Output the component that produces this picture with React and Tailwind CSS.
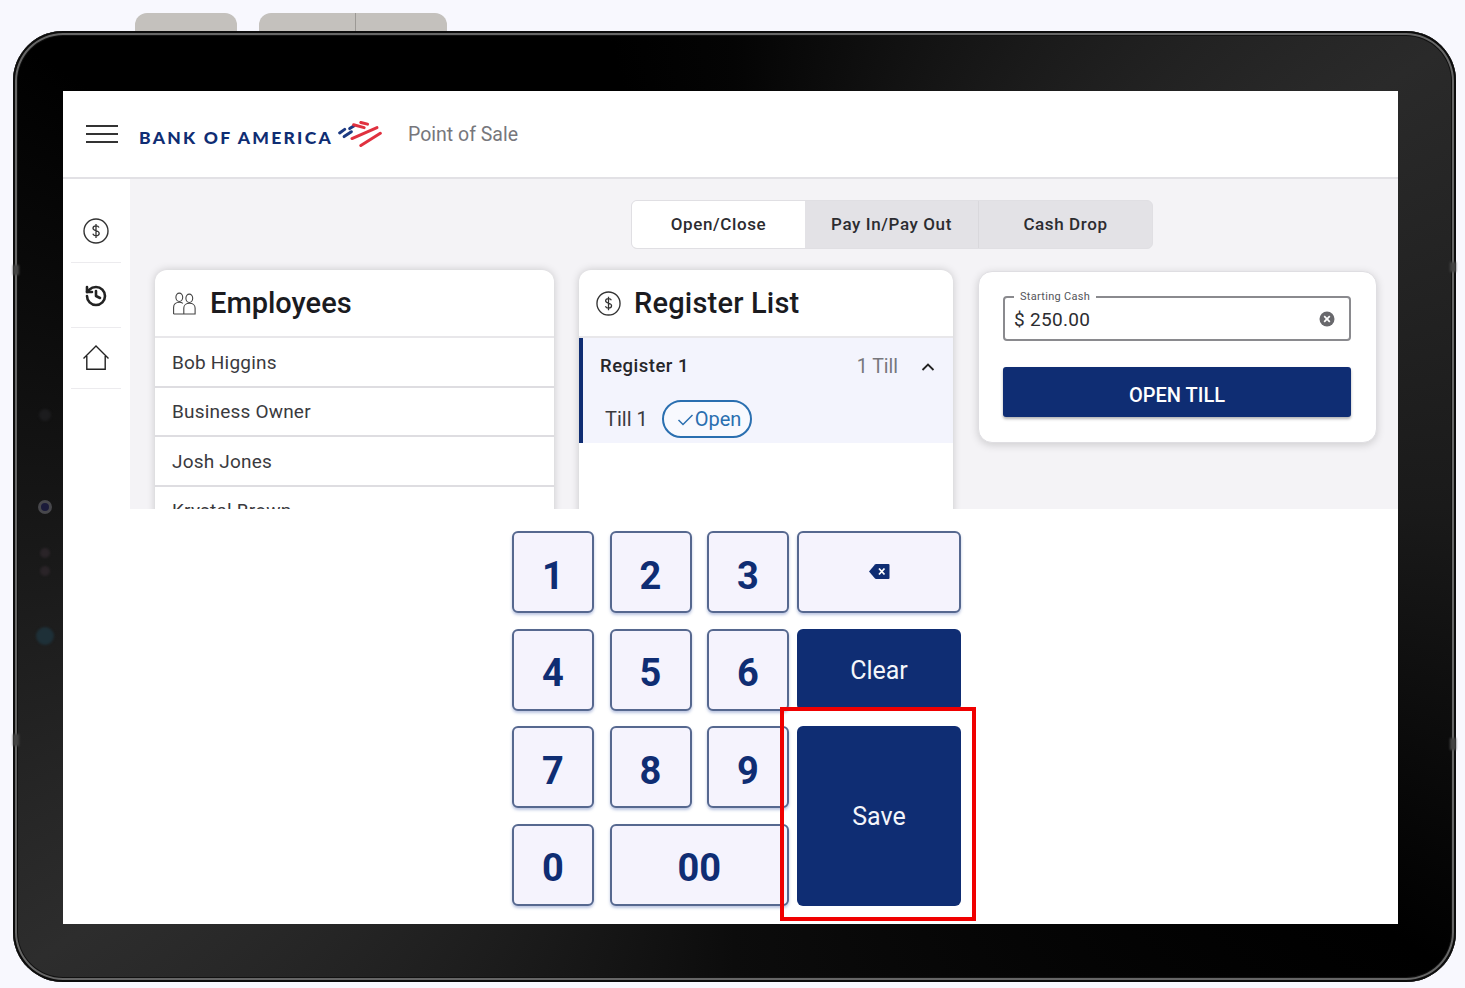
import React from "react";
import { History } from "lucide-react";

const DollarIcon = ({ size = 26 }) => (
  <svg width={size} height={size} viewBox="0 0 26 26" fill="none" stroke="#333" strokeWidth="1.4">
    <circle cx="13" cy="13" r="12" />
    <path d="M16 9.6c-.5-1.2-1.6-1.8-3-1.8-1.7 0-3 .9-3 2.4 0 3.3 6.2 1.8 6.2 5.1 0 1.5-1.4 2.5-3.2 2.5-1.5 0-2.7-.7-3.2-2M13 6v14" strokeWidth="1.3" />
  </svg>
);

const HomeIcon = () => (
  <svg width="28" height="28" viewBox="0 0 28 28" fill="none" stroke="#222" strokeWidth="1.4">
    <path d="M1.5 14.5 14 2l12.5 12.5M4.8 12v13.2h18.4V12" />
  </svg>
);

const PeopleIcon = () => (
  <svg width="23" height="23" viewBox="0 0 23 23" fill="none" stroke="#444" strokeWidth="1.1">
    <ellipse cx="6.3" cy="5.3" rx="3.4" ry="4.2" />
    <ellipse cx="16.3" cy="6.3" rx="3.4" ry="4.2" />
    <path d="M.6 22v-6.5c0-3 2.3-5.2 5.700-5.200 1.500 0 2.700.4 3.600 1.100" />
    <path d="M.6 22h21.500v-6c0-2.700-2.300-4.700-5.600-4.700s-5.700 2-5.700 4.700v6" />
  </svg>
);

const BofaFlag = () => (
  <svg width="44" height="26" viewBox="0 -1 39.5 23.3" fill="none" strokeWidth="2.7" strokeLinecap="round">
    <g stroke="#1c3a82">
      <path d="M1.5 9.7 6 6.500" />
      <path d="M5.500 13 12 8.600" />
      <path d="M10.500 5.800 14.500 3.200" />
    </g>
    <g stroke="#e0313f">
      <path d="M20.500 .3 26.500 1.800" />
      <path d="M14 2.400 23.500 4.900" />
      <path d="M12.500 14.700 35 4.900" />
      <path d="M20.500 21 38 10" />
    </g>
  </svg>
);

const Key = ({ children, className = "" }) => (
  <button className={`flex items-center justify-center rounded-md border-2 border-[#56688f] bg-[#f5f3fd] pt-[8px] text-[38px] font-bold text-[#0f2d73] shadow-[0_2px_3px_rgba(60,90,170,0.35)] ${className}`}>
    {children}
  </button>
);

const ListRow = ({ name }) => (
  <div className="flex h-[49.5px] items-center border-b-2 border-[#dedde1] pl-[17px] pt-[2px] text-[19px] tracking-[0.2px] text-[#3a3a3e]">
    {name}
  </div>
);

const SideItem = ({ children, className = "" }) => (
  <div className={`ml-[8px] mr-[9px] flex items-center justify-center border-b border-[#ecebee] ${className}`}>
    {children}
  </div>
);

export default function App() {
  return (
    <div className="relative h-[988px] w-[1465px] overflow-hidden bg-[#f8f8fe] font-['Roboto',sans-serif]">
      {/* buttons on top of the tablet */}
      <div className="absolute left-[135px] top-[13px] h-[24px] w-[102px] rounded-t-[12px] bg-[#c4c1bd]" />
      <div className="absolute left-[259px] top-[13px] h-[24px] w-[188px] rounded-t-[12px] bg-[#c4c1bd]">
        <div className="h-full w-[97px] border-r border-[#9c9995]" />
      </div>

      <div className="absolute left-[13px] top-[31px] h-[951px] w-[1443px] rounded-[50px] bg-[conic-gradient(#040404_0deg,#2a2a2a_57deg,#1a1a1a_90deg,#000_123deg,#0c0c0c_180deg,#2d2d2d_237deg,#161616_270deg,#000_303deg,#000_345deg,#040404_360deg)] pl-[50px] pt-[60px] shadow-[inset_0_0_0_2px_#0c0c0c,inset_0_0_0_4px_#666,inset_0_0_0_5px_#111]">
        {/* side button marks */}
        <div className="absolute left-0 top-[234px] h-[10px] w-[6px] bg-[#444] blur-[1px]" />
        <div className="absolute left-0 top-[703px] h-[12px] w-[6px] bg-[#444] blur-[1px]" />
        <div className="absolute right-0 top-[231px] h-[10px] w-[6px] bg-[#444] blur-[1px]" />
        <div className="absolute right-0 top-[707px] h-[12px] w-[6px] bg-[#444] blur-[1px]" />

        {/* camera dots */}
        <div className="absolute left-[26px] top-[378px] h-[12px] w-[12px] rounded-full bg-[#1c1c1e] blur-[1px]" />
        <div className="absolute left-[25px] top-[469px] h-[14px] w-[14px] rounded-full border-[3px] border-[#47474b] bg-[#1b1b3a] blur-[0.5px]" />
        <div className="absolute left-[27px] top-[517px] h-[10px] w-[10px] rounded-full bg-[#2a2428] blur-[1px]" />
        <div className="absolute left-[27px] top-[535px] h-[10px] w-[10px] rounded-full bg-[#2a2428] blur-[1px]" />
        <div className="absolute left-[23px] top-[596px] h-[18px] w-[18px] rounded-full bg-[#1e3038] blur-[1px]" />

        <div className="flex h-[833px] w-[1335px] flex-col bg-white">
          {/* header */}
          <header className="flex h-[88px] shrink-0 items-center border-b-2 border-[#e2e1e5]">
            <div className="ml-[23px] flex w-[32px] flex-col gap-[6px]">
              <div className="h-[2px] bg-[#333]" />
              <div className="h-[2px] bg-[#333]" />
              <div className="h-[2px] bg-[#333]" />
            </div>
            <div className="ml-[21px] mt-[8px] font-['Lato',sans-serif] text-[17.5px] font-black leading-none tracking-[2.25px] text-[#0f2d73]">
              BANK OF AMERICA
            </div>
            <div className="ml-[5px]">
              <BofaFlag />
            </div>
            <div className="ml-[26px] mt-[2px] text-[19.5px] text-[#77777c]">Point of Sale</div>
          </header>

          {/* body */}
          <div className="flex h-[330px] shrink-0 overflow-hidden">
            <aside className="flex w-[67px] shrink-0 flex-col">
              <SideItem className="h-[84px] pt-[20px]">
                <DollarIcon />
              </SideItem>
              <SideItem className="h-[65px] pt-[2px]">
                <History size={24} color="#222" strokeWidth={2.6} />
              </SideItem>
              <SideItem className="h-[61px]">
                <HomeIcon />
              </SideItem>
            </aside>

            <main className="flex-1 bg-[#f4f3f6]">
              <div className="ml-[501px] mt-[21px] flex h-[49px] w-[522px] overflow-hidden rounded-[6px] border border-[#e0dfe3] bg-[#e3e2e6] text-[17px] font-medium tracking-[0.6px] text-[#2c2c30]">
                <div className="flex w-[173px] items-center justify-center bg-white">Open/Close</div>
                <div className="flex w-[174px] items-center justify-center border-r border-[#d9d8dc]">Pay In/Pay Out</div>
                <div className="flex flex-1 items-center justify-center">Cash Drop</div>
              </div>

              <div className="ml-[25px] mt-[21px] flex items-start">
                <section className="h-[300px] w-[399px] rounded-t-[12px] bg-white shadow-[0_0_8px_rgba(0,0,0,0.18)]">
                  <div className="flex h-[68px] items-center border-b-2 border-[#e8e7ea] pl-[18px]">
                    <PeopleIcon />
                    <h2 className="ml-[14px] mt-[1px] text-[29px] font-medium leading-none text-[#1b1b1f]">Employees</h2>
                  </div>
                  <ListRow name="Bob Higgins" />
                  <ListRow name="Business Owner" />
                  <ListRow name="Josh Jones" />
                  <ListRow name="Krystal Brown" />
                </section>

                <section className="ml-[25px] h-[300px] w-[374px] rounded-t-[12px] bg-white shadow-[0_0_8px_rgba(0,0,0,0.18)]">
                  <div className="flex h-[68px] items-center border-b-2 border-[#e8e7ea] pl-[17px]">
                    <DollarIcon size={25} />
                    <h2 className="ml-[13px] mt-[1px] text-[29px] font-medium leading-none tracking-[0.2px] text-[#1b1b1f]">Register List</h2>
                  </div>
                  <div className="h-[105px] border-l-[4px] border-[#0f2d73] bg-[#f3f4fd]">
                    <div className="flex h-[57px] items-center px-[17px]">
                      <span className="text-[18.5px] font-medium tracking-[0.5px] text-[#26262a]">Register 1</span>
                      <span className="ml-auto mr-[22px] text-[19.5px] text-[#77777c]">1 Till</span>
                      <svg width="16" height="16" viewBox="0 0 16 16" fill="none" stroke="#222" strokeWidth="1.8">
                        <path d="M2.5 11 8 5.5l5.5 5.5" />
                      </svg>
                    </div>
                    <div className="mt-[5px] flex items-center pl-[22px]">
                      <span className="text-[20px] text-[#3a3a3e]">Till 1</span>
                      <span className="ml-[14px] flex h-[38px] w-[90px] items-center rounded-full border-2 border-[#2a6fb0] bg-[#f8f9fe] pl-[13px] text-[20px] text-[#2a6fb0]">
                        <svg width="17" height="17" viewBox="0 0 17 17" fill="none" stroke="#2a6fb0" strokeWidth="1.5">
                          <path d="M1.5 9 6 13.5 15.5 4" />
                        </svg>
                        <span className="ml-[1px]">Open</span>
                      </span>
                    </div>
                  </div>
                </section>

                <section className="ml-[25px] mt-[1px] h-[172px] w-[399px] rounded-[14px] border border-[#dfdee2] bg-white pl-[24px] pr-[25px] pt-[24px] shadow-[0_2px_8px_rgba(0,0,0,0.16)]">
                  <div className="relative flex h-[45px] items-center rounded-[4px] border-2 border-[#8a8a8e] pl-[9px] pr-[14px] text-[19px] tracking-[0.3px] text-[#2c2c30]">
                    <span className="absolute -top-[8px] left-[9px] bg-white px-[6px] text-[11px] leading-[14px] tracking-[0.3px] text-[#55555a]">Starting Cash</span>
                    <span className="mr-[5px] mt-[3px]">$</span>
                    <span className="mt-[3px]">250.00</span>
                    <svg className="ml-auto" width="16" height="16" viewBox="0 0 16 16">
                      <circle cx="8" cy="8" r="7.5" fill="#68686c" />
                      <path d="M5.2 5.2l5.6 5.6M10.8 5.2l-5.6 5.6" stroke="#fff" strokeWidth="1.7" />
                    </svg>
                  </div>
                  <button className="mt-[26px] flex h-[50px] w-full items-center justify-center rounded-[3px] bg-[#0f2d73] pt-[5px] text-[20px] font-medium text-white shadow-[0_2px_3px_rgba(0,0,0,0.3)]">
                    OPEN TILL
                  </button>
                </section>
              </div>
            </main>
          </div>

          {/* keypad */}
          <div className="relative ml-[449px] mt-[22px] flex w-[449px]">
            <div className="grid w-[277px] grid-cols-3 grid-rows-[82px_82px_82px_82px] gap-x-[15.5px] gap-y-[15.67px]">
              <Key>1</Key>
              <Key>2</Key>
              <Key>3</Key>
              <Key>4</Key>
              <Key>5</Key>
              <Key>6</Key>
              <Key>7</Key>
              <Key>8</Key>
              <Key>9</Key>
              <Key>0</Key>
              <Key className="col-span-2">00</Key>
            </div>
            <div className="ml-[8px] grid w-[164px] grid-rows-[82px_82px_1fr] gap-y-[15.67px]">
              <Key>
                <svg className="-mt-[10px] mr-[1px]" width="22" height="17" viewBox="0 0 22 17">
                  <path d="M7 1.5a1.5 1.5 0 0 1 1-.5h12.5a1 1 0 0 1 1 1v13a1 1 0 0 1-1 1H8a1.5 1.5 0 0 1-1-.5L1 8.5z" fill="#0f2d73" />
                  <path d="M11 5.5l5.5 6M16.5 5.5l-5.500 6" stroke="#fff" strokeWidth="1.8" />
                </svg>
              </Key>
              <button className="rounded-md bg-[#0f2d73] pt-[2px] text-[25px] text-[#f4f5fa]">Clear</button>
              <button className="rounded-md bg-[#0f2d73] pt-[2px] text-[25px] text-[#f4f5fa]">Save</button>
            </div>
            {/* highlight */}
            <div className="pointer-events-none absolute left-[268px] top-[176px] h-[214px] w-[196px] border-[4px] border-[#f00000]" />
          </div>
        </div>
      </div>
    </div>
  );
}
